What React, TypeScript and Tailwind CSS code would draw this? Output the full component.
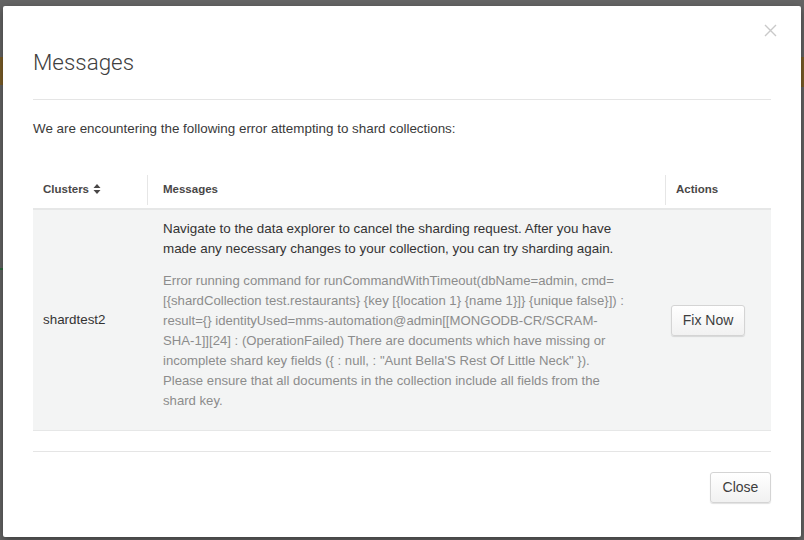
import React from 'react';

const SortIcon: React.FC = () => (
  <svg width="8" height="12" viewBox="0 0 8 12" className="inline-block ml-[4px] -mt-[2px]">
    <path d="M0.5 5 L4 1 L7.5 5 Z" fill="#494747" />
    <path d="M0.5 7 L4 11 L7.5 7 Z" fill="#494747" />
  </svg>
);

const CloseIcon: React.FC = () => (
  <svg width="13" height="13" viewBox="0 0 13 13">
    <path d="M1 1 L12 12 M12 1 L1 12" stroke="#c9c9c9" strokeWidth="1.4" />
  </svg>
);

const btn =
  'rounded-[3px] border border-[#d4d4d4] bg-gradient-to-b from-white to-[#f1f1f1] shadow-[0_1px_1px_rgba(0,0,0,0.12)] text-[14px] text-[#3e3e3e] h-[31px]';

export default function App() {
  return (
    <div className="w-[804px] h-[540px] bg-[#656565] relative overflow-hidden font-['Liberation_Sans',Arial,sans-serif]">
      {/* Page behind the backdrop */}
      <div className="absolute left-0 top-[57px] w-[3px] h-[28px] bg-[#7d5f28]" />
      <div className="absolute right-0 top-[57px] w-[3px] h-[30px] bg-[#7d5f28]" />
      <div className="absolute left-0 top-[268px] w-[3px] h-[2px] bg-[#2f6b3f]" />

      {/* Modal */}
      <div className="absolute left-[3px] top-[6px] w-[798px] h-[531px] bg-white rounded-[2px] shadow-[0_3px_9px_rgba(0,0,0,0.4)] px-[30px] flex flex-col">
        <button className="absolute right-[20px] top-[14px] p-[4px]">
          <CloseIcon />
        </button>

        {/* Header */}
        <div className="pt-[43px] pb-[24px] border-b border-[#e5e5e5]">
          <h2 className="font-['Roboto',sans-serif] font-light text-[22.4px] leading-[26px] text-[#3f3f3f]">Messages</h2>
        </div>

        {/* Body */}
        <div className="pt-[19px]">
          <p className="text-[13.4px] leading-[20px] text-[#3a3a3a]">
            We are encountering the following error attempting to shard collections:
          </p>

          <div className="mt-[33px]">
            {/* Table head */}
            <div className="flex items-center h-[38px] border-b-2 border-[#e6e7e7] text-[11.5px] font-bold text-[#494747]">
              <div className="w-[114px] pl-[10px]">
                Clusters
                <SortIcon />
              </div>
              <div className="w-px h-[30px] bg-[#e6e6e6]" />
              <div className="flex-1 pl-[15px]">Messages</div>
              <div className="w-px h-[30px] bg-[#e6e6e6]" />
              <div className="w-[105px] pl-[10px]">Actions</div>
            </div>

            {/* Row */}
            <div className="flex bg-[#f3f4f4] border-b border-[#e6e7e7] text-[13.4px] leading-[20px]">
              <div className="w-[114px] pl-[10px] flex items-center text-[#333]">shardtest2</div>
              <div className="w-px" />
              <div className="flex-1 pl-[15px] pr-[40px] pt-[9px] pb-[19px]">
                <p className="text-[#333] mb-[12px]">
                  Navigate to the data explorer to cancel the sharding request. After you have made any necessary changes to your collection, you can try sharding again.
                </p>
                <p className="text-[#8c8c8c] text-[13.15px]">
                  Error running command for runCommandWithTimeout(dbName=admin, cmd=[&#123;shardCollection test.restaurants&#125; &#123;key [&#123;location 1&#125; &#123;name 1&#125;]&#125; &#123;unique false&#125;]) : result=&#123;&#125; identityUsed=mms-automation@admin[[MONGODB-CR/SCRAM-SHA-1]][24] : (OperationFailed) There are documents which have missing or incomplete shard key fields (&#123; : null, : "Aunt Bella'S Rest Of Little Neck" &#125;). Please ensure that all documents in the collection include all fields from the shard key.
                </p>
              </div>
              <div className="w-px" />
              <div className="w-[105px] pl-[5px] flex items-center">
                <button className={`${btn} w-[74px]`}>Fix Now</button>
              </div>
            </div>
          </div>
        </div>

        {/* Footer */}
        <div className="mt-[20px] border-t border-[#e5e5e5] pt-[20px] flex justify-end">
          <button className={`${btn} w-[61px]`}>Close</button>
        </div>
      </div>
    </div>
  );
}
